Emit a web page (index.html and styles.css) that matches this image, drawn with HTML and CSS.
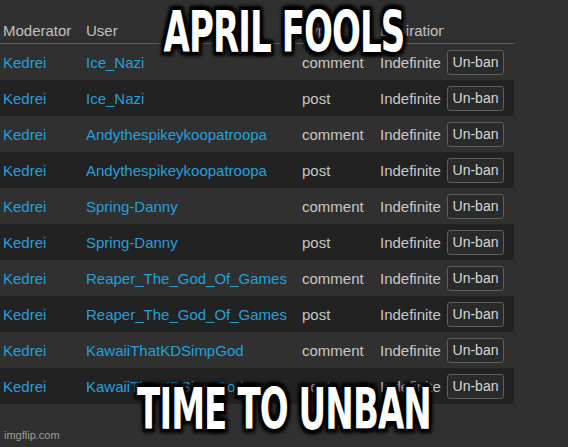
FILE: index.html
```html
<!DOCTYPE html>
<html lang="en">
<head>
    <meta charset="UTF-8">
    <meta name="viewport" content="width=device-width, initial-scale=1.0">
    <title>April Fools - Time to unban</title>
    <link rel="stylesheet" href="styles.css">
</head>
<body>
    <div class="meme">
        <div class="bans">
            <div class="row head">
                <div class="cell">Moderator</div>
                <div class="cell">User</div>
                <div class="cell">Type</div>
                <div class="cell">Expiration</div>
                <div class="cell"></div>
            </div>
            <div class="row">
                <div class="cell link">Kedrei</div>
                <div class="cell link">Ice_Nazi</div>
                <div class="cell">comment</div>
                <div class="cell">Indefinite</div>
                <div class="cell"><button>Un-ban</button></div>
            </div>
            <div class="row">
                <div class="cell link">Kedrei</div>
                <div class="cell link">Ice_Nazi</div>
                <div class="cell">post</div>
                <div class="cell">Indefinite</div>
                <div class="cell"><button>Un-ban</button></div>
            </div>
            <div class="row">
                <div class="cell link">Kedrei</div>
                <div class="cell link">Andythespikeykoopatroopa</div>
                <div class="cell">comment</div>
                <div class="cell">Indefinite</div>
                <div class="cell"><button>Un-ban</button></div>
            </div>
            <div class="row">
                <div class="cell link">Kedrei</div>
                <div class="cell link">Andythespikeykoopatroopa</div>
                <div class="cell">post</div>
                <div class="cell">Indefinite</div>
                <div class="cell"><button>Un-ban</button></div>
            </div>
            <div class="row">
                <div class="cell link">Kedrei</div>
                <div class="cell link">Spring-Danny</div>
                <div class="cell">comment</div>
                <div class="cell">Indefinite</div>
                <div class="cell"><button>Un-ban</button></div>
            </div>
            <div class="row">
                <div class="cell link">Kedrei</div>
                <div class="cell link">Spring-Danny</div>
                <div class="cell">post</div>
                <div class="cell">Indefinite</div>
                <div class="cell"><button>Un-ban</button></div>
            </div>
            <div class="row">
                <div class="cell link">Kedrei</div>
                <div class="cell link">Reaper_The_God_Of_Games</div>
                <div class="cell">comment</div>
                <div class="cell">Indefinite</div>
                <div class="cell"><button>Un-ban</button></div>
            </div>
            <div class="row">
                <div class="cell link">Kedrei</div>
                <div class="cell link">Reaper_The_God_Of_Games</div>
                <div class="cell">post</div>
                <div class="cell">Indefinite</div>
                <div class="cell"><button>Un-ban</button></div>
            </div>
            <div class="row">
                <div class="cell link">Kedrei</div>
                <div class="cell link">KawaiiThatKDSimpGod</div>
                <div class="cell">comment</div>
                <div class="cell">Indefinite</div>
                <div class="cell"><button>Un-ban</button></div>
            </div>
            <div class="row">
                <div class="cell link">Kedrei</div>
                <div class="cell link">KawaiiThatKDSimpGod</div>
                <div class="cell">post</div>
                <div class="cell">Indefinite</div>
                <div class="cell"><button>Un-ban</button></div>
            </div>
        </div>
        <div class="watermark">imgflip.com</div>
        <div class="caption top">APRIL FOOLS</div>
        <div class="caption bottom">TIME TO UNBAN</div>
    </div>
</body>
</html>
```

FILE: styles.css
```css
body {
    margin: 0;
    padding: 0;
    background-color: #303030;
    font-family: Arial, "Liberation Sans", sans-serif;
}
.meme {
    position: relative;
    width: 568px;
    height: 447px;
    overflow: hidden;
    background-color: #303030;
}
.bans {
    width: 514px;
    font-size: 15px;
    color: #c8c8c8;
}
.row {
    display: grid;
    grid-template-columns: 83px 216px 78px 67px 70px;
    height: 36px;
    align-items: center;
}
.row:nth-child(odd) {
    background-color: #222222;
}
.row.head {
    height: 43px;
    align-items: end;
    border-bottom: 1px solid #5a5a5a;
    background-color: transparent;
}
.head .cell {
    padding-bottom: 4px;
    color: #c0c0c0;
}
.cell {
    padding-left: 3px;
    white-space: nowrap;
    overflow: hidden;
}
.link {
    color: #22a0dc;
}
button {
    display: block;
    width: 57px;
    height: 25px;
    padding: 0;
    border: 1px solid #5e5e5e;
    border-radius: 3px;
    background-color: #2a2a2a;
    color: #d8d8d8;
    font-family: Arial, "Liberation Sans", sans-serif;
    font-size: 14px;
}
.watermark {
    position: absolute;
    left: 4px;
    top: 429px;
    font-size: 11px;
    color: #9c9c9c;
}
.caption {
    position: absolute;
    left: 0;
    right: 0;
    text-align: center;
    font-family: "Liberation Sans Narrow", "DejaVu Sans Condensed", "DejaVu Sans", sans-serif;
    font-stretch: condensed;
    font-weight: bold;
    font-size: 42px;
    line-height: 42px;
    color: #ffffff;
    letter-spacing: -1px;
    -webkit-text-stroke: 4px #000;
    paint-order: stroke fill;
    text-shadow: 3px 3px 3px #000, -3px 3px 3px #000, 3px -3px 3px #000, -3px -3px 3px #000, 0 0 4px #000;
    transform: scale(0.9, 1.36);
}
.caption.top {
    top: 12px;
}
.caption.bottom {
    top: 389px;
}
```
